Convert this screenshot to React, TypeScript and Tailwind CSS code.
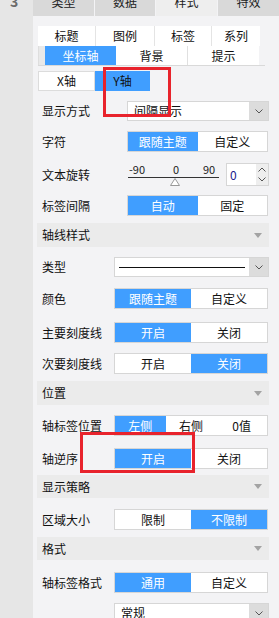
import React from 'react';

const Chevron = ({ up = false }: { up?: boolean }) => (
  <svg width="8" height="5" viewBox="0 0 8 5" className="block">
    <polyline
      points={up ? '0.5,4.5 4,1 7.5,4.5' : '0.5,0.5 4,4 7.5,0.5'}
      fill="none"
      stroke="#555"
      strokeWidth="1"
    />
  </svg>
);

const Caret = () => (
  <svg width="8" height="5" viewBox="0 0 8 5" className="block">
    <polygon points="0,0 8,0 4,5" fill="#a3a3a3" />
  </svg>
);

function Seg({ items, active, cls }: { items: string[]; active: number; cls: string }) {
  return (
    <div className={`flex h-[21px] border border-[#d6d6d6] bg-white ${cls}`}>
      {items.map((t, i) => (
        <div
          key={t}
          className={`flex flex-1 items-center justify-center leading-none ${
            i === active ? 'bg-[#409eff] text-white' : 'text-[#111]'
          }`}
        >
          {t}
        </div>
      ))}
    </div>
  );
}

function Row({ label, mt, lw, children }: { label: string; mt: string; lw: string; children: React.ReactNode }) {
  return (
    <div className={`flex items-center pl-[9px] pr-[10px] ${mt}`}>
      <div className={`${lw} shrink-0 leading-none text-[#111]`}>{label}</div>
      <div className="flex-1">{children}</div>
    </div>
  );
}

function Header({ label, mt, h }: { label: string; mt: string; h: string }) {
  return (
    <div className={`ml-[4px] mr-[10px] flex items-center justify-between bg-[#ebebeb] pl-[5px] pr-[7px] ${mt} ${h}`}>
      <span className="leading-none text-[#111]">{label}</span>
      <Caret />
    </div>
  );
}

function Select({ children }: { children: React.ReactNode }) {
  return (
    <div className="flex h-[20px] border border-[#d6d6d6] bg-white">
      <div className="flex flex-1 items-center overflow-hidden pl-[4px] leading-none text-[#111]">{children}</div>
      <div className="flex w-[19px] items-center justify-center bg-[#dcdcdc]">
        <Chevron />
      </div>
    </div>
  );
}

export default function App() {
  return (
    <div className="relative flex h-[618px] w-[279px] overflow-hidden font-['Noto_Sans_CJK_SC','Noto_Sans',sans-serif] text-[12px]">
      {/* left strip */}
      <div className="w-[33px] shrink-0 bg-[#e6e6e6]">
        <div className="-mt-[6px] ml-[10px] text-[14px] font-semibold leading-none text-[#6b6b6b]">3</div>
      </div>

      {/* main panel */}
      <div className="flex-1 bg-[#f3f3f5]">
        {/* top tabs */}
        <div className="flex h-[16px] overflow-hidden bg-[#f3f3f5]">
          {[
            ['类型', 'w-[61px] bg-[#d9d9d9]'],
            ['数据', 'w-[60px] bg-[#d9d9d9] ml-[1px]'],
            ['样式', 'w-[61px] bg-[#eeeeee] ml-[1px]'],
            ['特效', 'flex-1 bg-[#d9d9d9] ml-[1px]'],
          ].map(([t, c]) => (
            <div key={t} className={`flex justify-center ${c}`}>
              <span className="-mt-[4px] leading-[12px] text-[#222]">{t}</span>
            </div>
          ))}
        </div>

        {/* sub tabs row */}
        <div className="ml-[5px] mt-[10px] flex h-[20px] w-[222px] gap-[1px] bg-[#e4e4e4]">
          {['标题', '图例', '标签', '系列'].map((t, i) => (
            <div
              key={t}
              className={`flex items-center justify-center bg-white leading-none text-[#111] ${
                ['w-[57px]', 'w-[58px]', 'w-[56px]', 'w-[48px]'][i]
              }`}
            >
              {t}
            </div>
          ))}
        </div>
        <div className="ml-[5px] flex h-[20px] w-[227px] border-b border-[#d9d9d9]">
          <div className="w-[7px] border-l border-[#dedede] bg-[#e9e9e9]" />
          <div className="flex w-[71px] items-center justify-center bg-[#409eff] leading-none text-white">坐标轴</div>
          <div className="flex w-[72px] items-center justify-center border-r border-[#e0e0e0] bg-white leading-none text-[#111]">背景</div>
          <div className="flex w-[71px] items-center justify-center bg-white leading-none text-[#111]">提示</div>
        </div>

        {/* X / Y axis */}
        <div className="ml-[5px] mt-[5px] flex h-[20px]">
          <div className="flex w-[57px] items-center justify-center border border-[#dcdcdc] bg-white leading-none text-[#111]">X轴</div>
          <div className="flex w-[55px] items-center justify-center bg-[#409eff] leading-none text-[#111]">Y轴</div>
        </div>

        <Row label="显示方式" mt="mt-[10px]" lw="w-[85px]">
          <Select>
            <span className="pl-[2px]">间隔显示</span>
          </Select>
        </Row>

        <Row label="字符" mt="mt-[10px]" lw="w-[85px]">
          <Seg items={['跟随主题', '自定义']} active={0} cls="mr-[1px]" />
        </Row>

        {/* text rotation */}
        <div className="mt-[11px] flex h-[23px] items-center pl-[9px] pr-[10px]">
          <div className="w-[86px] shrink-0 leading-none text-[#111]">文本旋转</div>
          <div className="relative h-[23px] w-[91px]">
            <div className="absolute left-[1px] top-[1px] text-[11px] leading-none text-[#222]">-90</div>
            <div className="absolute left-[45px] top-[1px] text-[11px] leading-none text-[#222]">0</div>
            <div className="absolute left-[75px] top-[1px] text-[11px] leading-none text-[#222]">90</div>
            <div className="absolute left-0 right-0 top-[14px] h-[1px] bg-[#333]" />
            <svg className="absolute left-[42px] top-[15px]" width="10" height="8" viewBox="0 0 10 8">
              <polygon points="5,0.5 9.5,7.5 0.5,7.5" fill="#fff" stroke="#999" strokeWidth="1" />
            </svg>
          </div>
          <div className="ml-[7px] flex h-[23px] flex-1 border border-[#d6d6d6] bg-white">
            <div className="flex flex-1 items-center pl-[3px] text-[12px] leading-none text-[#1a1a8c]">0</div>
            <div className="flex w-[12px] flex-col items-center justify-center gap-[5px] bg-[#eeeeee]">
              <Chevron up />
              <Chevron />
            </div>
          </div>
        </div>

        <Row label="标签间隔" mt="mt-[9px]" lw="w-[85px]">
          <Seg items={['自动', '固定']} active={0} cls="mr-[1px]" />
        </Row>

        <Header label="轴线样式" mt="mt-[7px]" h="h-[24px]" />

        <Row label="类型" mt="mt-[10px]" lw="w-[72px]">
          <Select>
            <div className="h-[1px] w-[126px] bg-[#111]" />
          </Select>
        </Row>

        <Row label="颜色" mt="mt-[11px]" lw="w-[72px]">
          <Seg items={['跟随主题', '自定义']} active={0} cls="mr-[1px] h-[20px]" />
        </Row>

        <Row label="主要刻度线" mt="mt-[13px]" lw="w-[72px]">
          <Seg items={['开启', '关闭']} active={0} cls="mr-[1px]" />
        </Row>

        <Row label="次要刻度线" mt="mt-[10px]" lw="w-[72px]">
          <Seg items={['开启', '关闭']} active={1} cls="mr-[1px]" />
        </Row>

        <Header label="位置" mt="mt-[7px]" h="h-[24px]" />

        <Row label="轴标签位置" mt="mt-[10px]" lw="w-[72px]">
          <Seg items={['左侧', '右侧', '0值']} active={0} cls="mr-[1px]" />
        </Row>

        <Row label="轴逆序" mt="mt-[12px]" lw="w-[72px]">
          <Seg items={['开启', '关闭']} active={0} cls="mr-[1px]" />
        </Row>

        <Header label="显示策略" mt="mt-[6px]" h="h-[23px]" />

        <Row label="区域大小" mt="mt-[11px]" lw="w-[72px]">
          <Seg items={['限制', '不限制']} active={1} cls="mr-[1px]" />
        </Row>

        <Header label="格式" mt="mt-[7px]" h="h-[23px]" />

        <Row label="轴标签格式" mt="mt-[12px]" lw="w-[72px]">
          <Seg items={['通用', '自定义']} active={0} cls="mr-[1px]" />
        </Row>

        <Row label="" mt="mt-[10px]" lw="w-[72px]">
          <Select>
            <span className="pl-[2px]">常规</span>
          </Select>
        </Row>
      </div>

      {/* red annotation boxes */}
      <div className="pointer-events-none absolute left-[103px] top-[67px] h-[50px] w-[68px] border-[3px] border-[#e8232c]" />
      <div className="pointer-events-none absolute left-[80px] top-[432px] h-[41px] w-[115px] border-[3px] border-[#e8232c]" />
    </div>
  );
}
